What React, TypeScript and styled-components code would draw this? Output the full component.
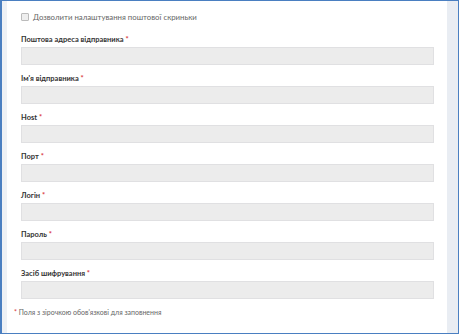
import styled, { createGlobalStyle } from "styled-components";

const Global = createGlobalStyle`
    html, body {
        margin: 0;
        padding: 0;
        background: #fff;
    }
    body {
        font-family: Lato, "Open Sans", "Liberation Sans", sans-serif;
    }
`;

const Frame = styled.div`
    width: 459px;
    height: 334px;
    box-sizing: border-box;
    border-top: 1px solid #4a7fc1;
    border-left: 2px solid #4a7fc1;
    border-right: 1px solid #4a7fc1;
    border-bottom: 1px solid #4a7fc1;
    display: flex;
    background: #e9edf3;
`;

const LeftStrip = styled.div`
    width: 5px;
    background: #eef1f5;
`;

const Main = styled.div`
    flex: 1;
    background: #fff;
    padding: 10px 13px 0 14px;
    display: flex;
    flex-direction: column;
`;

const RightStrip = styled.div`
    width: 11px;
    background: #e9edf3;
`;

const CheckRow = styled.label`
    display: flex;
    align-items: center;
    gap: 4px;
    height: 12px;
    font-size: 7.8px;
    color: #666;
`;

const Box = styled.span`
    width: 6px;
    height: 6px;
    border: 1px solid #bbb;
    border-radius: 1px;
    background: #eee;
`;

const Fields = styled.div`
    display: flex;
    flex-direction: column;
    gap: 9px;
    margin-top: 12px;
`;

const Group = styled.div`
    display: flex;
    flex-direction: column;
    gap: 2px;
`;

const Label = styled.div`
    height: 10px;
    line-height: 10px;
    font-size: 7.5px;
    font-weight: 700;
    color: #333;
`;

const Star = styled.span`
    color: #d9353b;
`;

const Input = styled.div`
    height: 18px;
    box-sizing: border-box;
    border: 1px solid #e0e0e2;
    background: #ececec;
`;

const Note = styled.div`
    margin-top: 8px;
    margin-left: -7px;
    font-size: 7px;
    line-height: 10px;
    color: #666;
`;

const fields = [
    "Поштова адреса відправника",
    "Ім'я відправника",
    "Host",
    "Порт",
    "Логін",
    "Пароль",
    "Засіб шифрування",
];

export default function App() {
    return (
        <>
            <Global />
            <Frame>
                <LeftStrip />
                <Main>
                    <CheckRow>
                        <Box />
                        Дозволити налаштування поштової скриньки
                    </CheckRow>
                    <Fields>
                        {fields.map(f => (
                            <Group key={f}>
                                <Label>
                                    {f} <Star>*</Star>
                                </Label>
                                <Input />
                            </Group>
                        ))}
                    </Fields>
                    <Note>
                        <Star>*</Star> Поля з зірочкою обов'язкові для заповнення
                    </Note>
                </Main>
                <RightStrip />
            </Frame>
        </>
    );
}
